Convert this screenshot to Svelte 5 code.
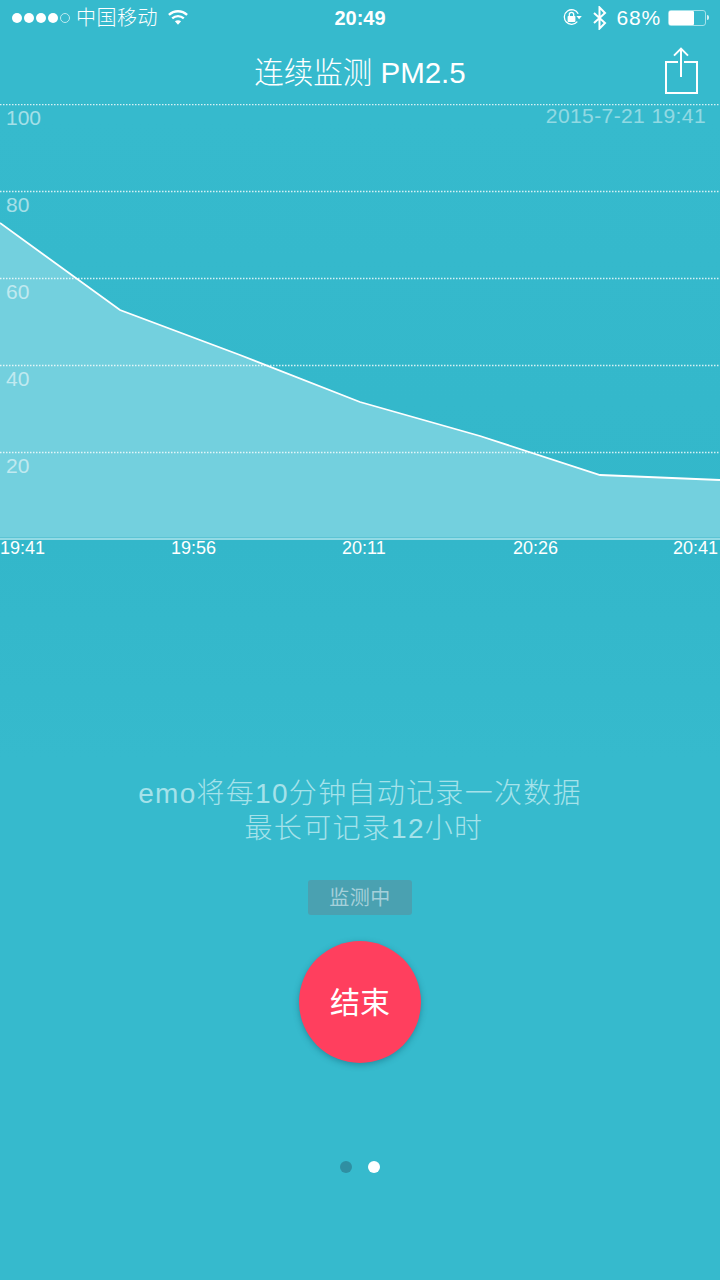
<script>
  const grid = [
    { y: 0, label: '100' },
    { y: 87, label: '80' },
    { y: 174, label: '60' },
    { y: 261, label: '40' },
    { y: 348, label: '20' }
  ];
  const pts = [[0,119],[120,206],[240,251],[360,298],[480,332],[600,371],[720,376]];
  const line = pts.map((p) => p.join(',')).join(' ');
  const area = `0,433 ${line} 720,433`;
  const times = ['19:41', '19:56', '20:11', '20:26'];
</script>

<div class="page">
  <header class="status">
    <div class="left">
      <span class="signal">
        <i></i><i></i><i></i><i></i><i class="off"></i>
      </span>
      <span class="carrier">中国移动</span>
      <svg class="wifi" width="20" height="16" viewBox="0 0 20 16">
        <path d="M.9 5.900C6 1 14 1 19.100 5.900" fill="none" stroke="#fff" stroke-width="2.300"/>
        <path d="M4.200 9.300c3.300-3 8.300-3 11.600 0" fill="none" stroke="#fff" stroke-width="2.300"/>
        <path d="M10 15.800 6.900 12.300c1.800-1.500 4.400-1.500 6.200 0z" fill="#fff"/>
      </svg>
    </div>
    <div class="clock">20:49</div>
    <div class="right">
      <svg class="orient" width="20" height="16" viewBox="0 0 20 16">
        <path d="M14.300 12.700A7.300 7.300 0 1 1 15.200 4.800" fill="none" stroke="#fff" stroke-width="1.300"/>
        <path d="M13.400 7h5.400l-2.700 3.200z" fill="#fff"/>
        <rect x="4.600" y="7" width="7.800" height="6" rx=".8" fill="#fff"/>
        <path d="M6.300 7.400V5.500a2.200 2.200 0 0 1 4.400 0v1.900" fill="none" stroke="#fff" stroke-width="1.300"/>
      </svg>
      <svg class="bt" width="14" height="24" viewBox="0 0 14 24">
        <path d="M1 7l11 10-5.500 5.600V1.400L12 7 1 17" fill="none" stroke="#fff" stroke-width="2"/>
      </svg>
      <span class="pct">68%</span>
      <span class="battery"><span class="charge"></span></span>
    </div>
  </header>

  <nav class="nav">
    <h1>连续监测 PM2.5</h1>
    <svg class="share" width="36" height="50" viewBox="0 0 36 50">
      <path d="M15 16H3v31h31V16H21" fill="none" stroke="#fff" stroke-width="2"/>
      <path d="M18 31V3M11 9.600 18 2.600l7 7" fill="none" stroke="#fff" stroke-width="2"/>
    </svg>
  </nav>

  <section class="chart">
    <svg class="plot" width="720" height="436" viewBox="0 0 720 436">
      <polygon points={area} fill="#73d0de"/>
      {#each grid as g}
        <line x1="0" x2="720" y1={g.y + 0.5} y2={g.y + 0.5} stroke="#fff" stroke-opacity=".8" stroke-width="1.500" stroke-dasharray="1.500 1.500"/>
      {/each}
      <polyline points={line} fill="none" stroke="#fff" stroke-width="1.800"/>
      <line x1="0" x2="720" y1="433.500" y2="433.500" stroke="#5cc4d4" stroke-width="1"/>
      <line x1="0" x2="720" y1="435" y2="435" stroke="#b4e7ee" stroke-width="1.500"/>
    </svg>
    {#each grid as g}
      <span class="tick" style="top:{g.y + 2}px">{g.label}</span>
    {/each}
    <span class="stamp">2015-7-21 19:41</span>
  </section>

  <div class="times">
    {#each times as t}
      <span class="time">{t}</span>
    {/each}
    <span class="time last">20:41</span>
  </div>

  <p class="msg">emo将每10分钟自动记录一次数据<br /><span class="second">最长可记录12小时</span></p>
  <div class="badge">监测中</div>
  <button class="stop">结束</button>
  <div class="dots"><i class="dim"></i><i class="on"></i></div>
</div>

<style>
  :global(body) {
    margin: 0;
    background: #36bacd;
  }
  .page {
    width: 720px;
    height: 1280px;
    overflow: hidden;
    background: linear-gradient(#36bacd 0, #36bacd 120px, #33b7ca 540px, #34b8cb 620px, #36bacd 760px);
    color: #fff;
    font-family: "Liberation Sans", "Noto Sans CJK SC", sans-serif;
    display: flex;
    flex-direction: column;
  }
  .status {
    height: 36px;
    display: grid;
    grid-template-columns: 1fr auto 1fr;
    align-items: center;
  }
  .left, .right {
    display: flex;
    align-items: center;
  }
  .left { padding-left: 12px; }
  .right {
    justify-content: flex-end;
    padding-right: 14px;
  }
  .signal {
    display: flex;
    gap: 2px;
  }
  .signal i {
    width: 10px;
    height: 10px;
    border-radius: 50%;
    background: #fff;
    box-sizing: border-box;
  }
  .signal i.off {
    background: none;
    border: 1px solid #bfeaf0;
  }
  .carrier {
    margin-left: 6px;
    font-size: 20px;
    font-weight: 300;
    letter-spacing: 0.500px;
    line-height: 36px;
  }
  .wifi { margin-left: 10px; margin-top: -3px; }
  .clock {
    font-size: 20px;
    font-weight: 700;
    line-height: 36px;
  }
  .orient { margin-right: 10px; margin-top: -2px; }
  .bt { margin-right: 10px; }
  .pct {
    font-size: 21px;
    letter-spacing: 0.800px;
    line-height: 36px;
    margin-right: 7px;
  }
  .battery {
    width: 38px;
    height: 16px;
    margin-top: -1px;
    border: 1px solid #a5e2ea;
    border-radius: 3px;
    box-sizing: border-box;
    display: flex;
    position: relative;
  }
  .battery::after {
    content: "";
    position: absolute;
    right: -4px;
    top: 4px;
    width: 2px;
    height: 5px;
    background: #d5f1f5;
    border-radius: 0 2px 2px 0;
  }
  .charge {
    width: 25px;
    background: #fff;
    border-radius: 1px;
  }
  .nav {
    height: 68px;
    display: flex;
    align-items: center;
    justify-content: center;
    position: relative;
  }
  .nav h1 {
    margin: 0;
    font-size: 29.500px;
    font-weight: 300;
  }
  .share {
    position: absolute;
    left: 663px;
    top: 10px;
  }
  .chart {
    position: relative;
    height: 436px;
  }
  .plot { display: block; }
  .tick {
    position: absolute;
    left: 6px;
    font-size: 21px;
    line-height: 24px;
    color: #ffffff;
    opacity: .55;
  }
  .stamp {
    position: absolute;
    right: 14px;
    top: 0;
    font-size: 21px;
    line-height: 24px;
    letter-spacing: 0.400px;
    color: #fff;
    opacity: .45;
  }
  .times {
    height: 18px;
    display: flex;
  }
  .time {
    flex: none;
    width: 171px;
    font-size: 18px;
    line-height: 17px;
  }
  .time:nth-child(4) { width: 160px; }
  .time.last { width: auto; }
  .msg {
    margin: 218px 0 0;
    text-align: center;
    font-size: 28px;
    line-height: 35px;
    font-weight: 300;
    letter-spacing: 1.300px;
    color: #a5e2ea;
  }
  .second { margin-left: 8px; }
  .badge {
    align-self: center;
    margin-top: 34px;
    width: 104px;
    height: 35px;
    line-height: 37px;
    border-radius: 3px;
    text-align: center;
    background: #4aa1b1;
    color: #a5d0da;
    font-size: 20px;
    letter-spacing: 0.500px;
  }
  .stop {
    align-self: center;
    margin-top: 26px;
    width: 122px;
    height: 122px;
    padding: 0 0 4px;
    border: 0;
    border-radius: 50%;
    background: #ff3f5e;
    color: #fff;
    font: inherit;
    font-size: 30px;
    box-shadow: 0 2px 6px rgba(0, 60, 80, .35);
  }
  .dots {
    margin-top: 98px;
    display: flex;
    justify-content: center;
    gap: 16px;
  }
  .dots i {
    width: 12px;
    height: 12px;
    border-radius: 50%;
  }
  .dots .dim { background: #2f8fa2; }
  .dots .on { background: #fff; }
</style>
